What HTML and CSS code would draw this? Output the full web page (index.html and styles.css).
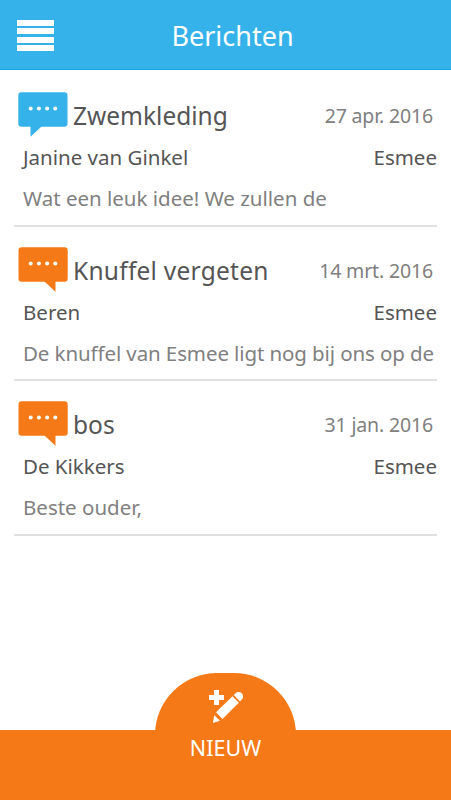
FILE: index.html
```html
<!DOCTYPE html>
<html lang="nl">
  <head>
    <meta charset="UTF-8" />
    <meta name="viewport" content="width=device-width, initial-scale=1.0" />
    <title>Berichten</title>
    <link rel="stylesheet" href="styles.css">
  </head>
  <body>
    <svg width="0" height="0" class="symbols">
      <symbol id="bubble" viewBox="0 0 50 45">
        <path fill="currentColor" d="M3.5 0.3H46.3a3.2 3.2 0 0 1 3.2 3.2V31.5a3.2 3.2 0 0 1-3.2 3.2H23.3L12.5 44.7V34.7H3.5a3.2 3.2 0 0 1-3.2-3.2V3.5A3.2 3.2 0 0 1 3.5 0.3Z"/>
      </symbol>
      <symbol id="dots" viewBox="0 0 50 45">
        <g fill="#fff">
          <circle cx="12.7" cy="16.6" r="2"/>
          <circle cx="20.9" cy="16.6" r="2"/>
          <circle cx="29.1" cy="16.6" r="2"/>
          <circle cx="37.3" cy="16.6" r="2"/>
        </g>
      </symbol>
    </svg>

    <header class="topbar">
      <button class="menu" aria-label="Menu">
        <span></span><span></span><span></span><span></span>
      </button>
      <h1>Berichten</h1>
    </header>

    <main class="messages">
      <article class="message">
        <div class="message-head">
          <svg class="icon received" viewBox="0 0 50 45"><use href="#bubble"/><use href="#dots"/></svg>
          <h2>Zwemkleding</h2>
          <time>27 apr. 2016</time>
        </div>
        <div class="people"><span>Janine van Ginkel</span><span>Esmee</span></div>
        <p>Wat een leuk idee! We zullen de</p>
      </article>

      <article class="message">
        <div class="message-head">
          <svg class="icon sent" viewBox="0 0 50 45"><use href="#bubble" transform="matrix(-1 0 0 1 50 0)"/><use href="#dots"/></svg>
          <h2 class="wide">Knuffel vergeten</h2>
          <time>14 mrt. 2016</time>
        </div>
        <div class="people"><span>Beren</span><span>Esmee</span></div>
        <p class="tight">De knuffel van Esmee ligt nog bij ons op de</p>
      </article>

      <article class="message">
        <div class="message-head">
          <svg class="icon sent" viewBox="0 0 50 45"><use href="#bubble" transform="matrix(-1 0 0 1 50 0)"/><use href="#dots"/></svg>
          <h2>bos</h2>
          <time>31 jan. 2016</time>
        </div>
        <div class="people"><span>De Kikkers</span><span>Esmee</span></div>
        <p>Beste ouder,</p>
      </article>
    </main>

    <footer class="bottombar">
      <button class="new">
        <svg width="36" height="36" viewBox="0 0 36 36" fill="#fff">
          <path d="M6 2h5v5h5v5h-5v5H6v-5H1V7h5z"/>
          <path d="M24.500 8.200l6.300 6.500L14.500 31 8 24.300z"/>
          <path d="M25.700 7l1.900-1.800a4.400 4.400 0 0 1 6.200 6.300L32 13.500z"/>
          <path d="M6.300 27.200l5.700 5.600L4.800 35z"/>
        </svg>
        <span>NIEUW</span>
      </button>
    </footer>
  </body>
</html>
```
FILE: styles.css
```css
* {
  box-sizing: border-box;
}
body {
  margin: 0;
  height: 100vh;
  display: flex;
  flex-direction: column;
  background-color: #fff;
  color: #555;
  font-family: "Noto Sans", "Open Sans", sans-serif;
  overflow: hidden;
}
button {
  border: none;
  padding: 0;
  background: none;
  color: #fff;
  font-family: inherit;
  cursor: pointer;
}
h1, h2, p {
  margin: 0;
  font-weight: 400;
}
.symbols {
  display: block;
  height: 0;
}
.topbar {
  display: grid;
  grid-template-columns: 54px 1fr 40px;
  flex: none;
  height: 70px;
  background-color: #36b2eb;
  border-bottom: 1px solid #1aa5e6;
  color: #fff;
}
.topbar h1 {
  font-size: 27px;
  line-height: 71px;
  text-align: center;
}
.menu {
  display: grid;
  grid-auto-rows: 6px;
  align-content: start;
  row-gap: 2.670px;
  padding: 19.500px 0 0 17px;
}
.menu span {
  width: 37px;
  background-color: #fff;
}
.messages {
  flex: 1;
  padding: 2px 14px 0;
}
.message {
  height: 154.500px;
  padding-top: 20px;
  border-bottom: 2px solid #e1e1e1;
}
.message-head {
  display: flex;
  align-items: center;
  height: 45px;
  padding: 0 4px;
}
.icon {
  flex: none;
  width: 50px;
  height: 45px;
}
.received {
  color: #36b2eb;
}
.sent {
  color: #f57a17;
}
.message h2 {
  margin-left: 5px;
  font-size: 24.500px;
  line-height: 45px;
  padding-top: 2px;
  white-space: nowrap;
}
.message h2.wide {
  letter-spacing: 0.250px;
}
.message time {
  margin-left: auto;
  padding-top: 2px;
  color: #808080;
  font-size: 19.500px;
  letter-spacing: -0.150px;
  white-space: nowrap;
}
.people {
  display: flex;
  justify-content: space-between;
  padding-left: 9px;
  font-size: 20.500px;
  line-height: 40px;
}
.message p {
  padding-left: 9px;
  color: #808080;
  font-size: 20.500px;
  line-height: 43px;
  white-space: nowrap;
}
.message p.tight {
  letter-spacing: -0.100px;
}
.bottombar {
  display: flex;
  justify-content: center;
  flex: none;
  height: 70.500px;
  background-color: #f57a17;
}
.new {
  display: flex;
  flex-direction: column;
  align-items: center;
  width: 141px;
  height: 127px;
  margin-top: -56.500px;
  padding-top: 15px;
  border-radius: 62px 62px 0 0;
  background-color: #f57a17;
  font-size: 21.500px;
}
.new span {
  line-height: 48px;
}
```
